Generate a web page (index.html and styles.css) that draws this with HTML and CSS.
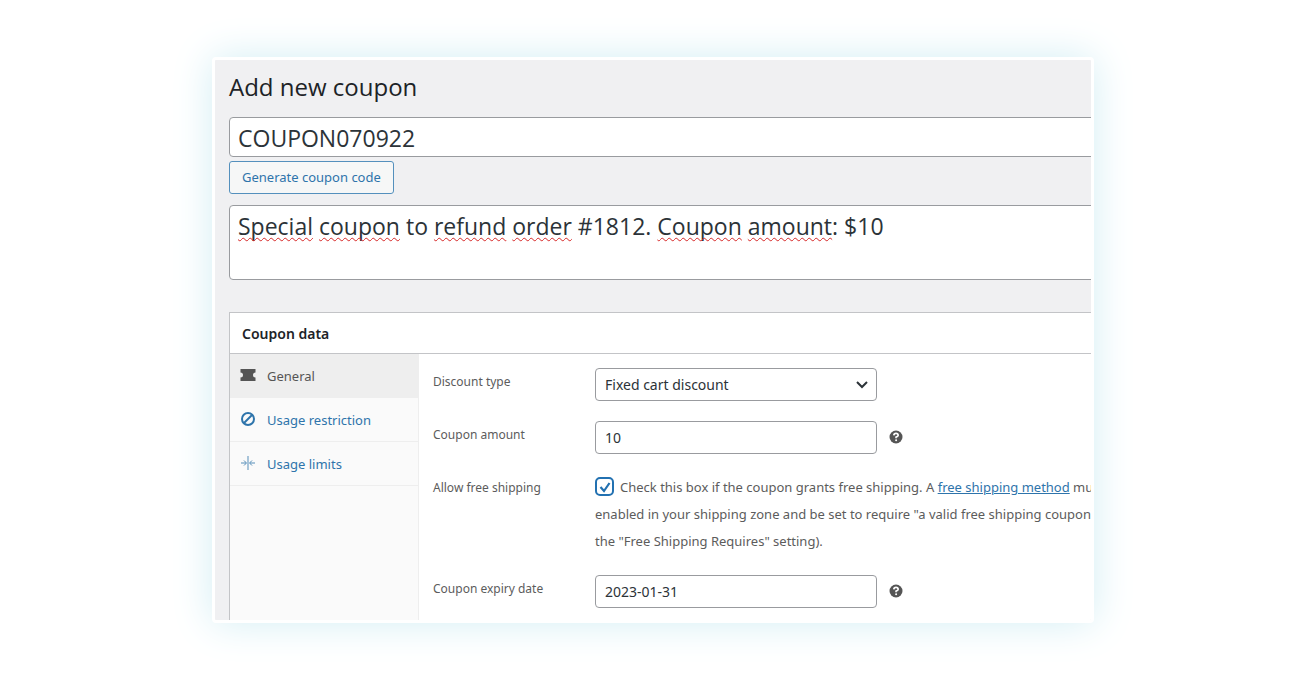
FILE: index.html
```html
<!DOCTYPE html>
<html lang="en">
<head>
    <meta charset="UTF-8">
    <meta name="viewport" content="width=device-width, initial-scale=1.0">
    <title>Add new coupon</title>
    <link rel="stylesheet" href="styles.css">
</head>
<body>
    <main class="frame">
        <form class="screen">
            <h1 class="page-title">Add new coupon</h1>
            <input class="title-input" type="text" value="COUPON070922" aria-label="Coupon code">
            <button class="generate-button" type="button">Generate coupon code</button>
            <div class="description">
                <textarea class="description-text" aria-label="Description" spellcheck="false">Special coupon to refund order #1812. Coupon amount: $10</textarea>
                <!-- spelling marks, drawn over the textarea -->
                <div class="description-marks" aria-hidden="true"><mark>Special</mark> <mark>coupon</mark> to <mark>refund</mark> <mark>order</mark> #1812. <mark>Coupon</mark> <mark>amount</mark>: $10</div>
            </div>

            <section class="postbox">
                <h2 class="postbox-title">Coupon data</h2>
                <div class="postbox-body">
                    <nav class="tabs">
                        <a class="tab active" href="#general">
                            <svg class="tab-icon" viewBox="0 0 16 16"><path fill="currentColor" d="M.5 1h15v3.500q-2.500 0-2.500 2.500t2.500 2.500v3.500H.5V9.500Q3 9.500 3 7T.5 4.500z"/></svg>
                            General
                        </a>
                        <a class="tab" href="#restriction">
                            <svg class="tab-icon" viewBox="0 0 16 16" fill="none" stroke="currentColor" stroke-width="2"><circle cx="8" cy="7" r="6"/><path d="M4 11l8-8"/></svg>
                            Usage restriction
                        </a>
                        <a class="tab" href="#limits">
                            <svg class="tab-icon thin" viewBox="0 0 16 16" fill="none" stroke="currentColor"><path d="M8 0v14M1 7h5M15 7h-5M4 4.500L6.500 7 4 9.500M12 4.500L9.500 7l2.500 2.500"/></svg>
                            Usage limits
                        </a>
                    </nav>
                    <div class="panel" id="general">
                        <div class="field">
                            <label for="discount_type">Discount type</label>
                            <select class="control" id="discount_type">
                                <option>Fixed cart discount</option>
                                <option>Percentage discount</option>
                                <option>Fixed product discount</option>
                            </select>
                        </div>
                        <div class="field">
                            <label for="coupon_amount">Coupon amount</label>
                            <input class="control" id="coupon_amount" type="text" value="10">
                            <svg class="help" viewBox="0 0 14 14"><circle cx="7" cy="7" r="6.500" fill="#555"/><path d="M4.800 5.400Q5 3.400 7 3.400t2.200 1.900Q9.200 6.500 7.100 7.100v1.200" fill="none" stroke="#fff" stroke-width="1.700"/><circle cx="7.100" cy="10.300" r="1" fill="#fff"/></svg>
                        </div>
                        <div class="field">
                            <label for="free_shipping">Allow free shipping</label>
                            <p class="note"><input class="checkbox" id="free_shipping" type="checkbox" checked>Check this box if the coupon grants free shipping. A <a href="#">free shipping method</a> must be<br>enabled in your shipping zone and be set to require "a valid free shipping coupon" (see<br>the "Free Shipping Requires" setting).</p>
                        </div>
                        <div class="field">
                            <label for="expiry_date">Coupon expiry date</label>
                            <input class="control" id="expiry_date" type="text" value="2023-01-31">
                            <svg class="help" viewBox="0 0 14 14"><circle cx="7" cy="7" r="6.500" fill="#555"/><path d="M4.800 5.400Q5 3.400 7 3.400t2.200 1.900Q9.200 6.500 7.100 7.100v1.200" fill="none" stroke="#fff" stroke-width="1.700"/><circle cx="7.100" cy="10.300" r="1" fill="#fff"/></svg>
                        </div>
                    </div>
                </div>
            </section>
        </form>
    </main>
</body>
</html>
```
FILE: styles.css
```css
* {
    box-sizing: border-box;
}

body {
    margin: 0;
    padding: 57px 206px 57px 212px;
    background: #fff;
    color: #5c5c5c;
    font-family: "Segoe UI", "Noto Sans", sans-serif;
    font-size: 13px;
}

input,
select,
textarea,
button {
    font-family: inherit;
    margin: 0;
}

a {
    color: #2e74ab;
}

.frame {
    border: 3px solid #fff;
    border-radius: 4px;
    background: #f0f0f2;
    box-shadow: 0 0 40px #d3eef4;
    overflow: hidden;
}

/* the screen runs on past the right edge of the frame */
.screen {
    display: flex;
    flex-direction: column;
    align-items: flex-start;
    width: calc(100% + 80px);
    padding: 11px 0 0 14px;
}

.page-title,
.title-input,
.description {
    font-family: "Segoe UI", "Open Sans", sans-serif;
}

.page-title {
    margin: 0 0 14px;
    color: #1d2327;
    font-size: 24px;
    font-weight: 400;
    line-height: 32px;
}

.title-input {
    width: 100%;
    height: 40px;
    margin-bottom: 4px;
    padding: 2px 8px 0;
    border: 1px solid #999b9f;
    border-radius: 4px;
    background: #fff;
    color: #2c3338;
    font-size: 23px;
}

.generate-button {
    height: 33px;
    margin-bottom: 11px;
    padding: 0 12px 1px;
    border: 1px solid #5490bd;
    border-radius: 3px;
    background: #f6f7f7;
    color: #2e74ab;
    font-size: 13px;
}

.description {
    display: grid;
    width: 100%;
    height: 75px;
    margin-bottom: 32px;
}

.description-text,
.description-marks {
    grid-area: 1 / 1;
    padding: 5px 8px;
    border: 1px solid #999b9f;
    border-radius: 4px;
    font-size: 23px;
    line-height: 30px;
}

.description-text {
    background: #fff;
    color: #2c3338;
    resize: none;
}

.description-marks {
    border-color: transparent;
    color: transparent;
    pointer-events: none;
}

.description-marks mark {
    background: none;
    color: transparent;
    text-decoration: underline wavy #d62828 1px;
    text-decoration-skip-ink: none;
    text-underline-offset: 2px;
}

.postbox {
    width: 100%;
    border: 1px solid #c3c4c7;
    border-bottom: 0;
    background: #fff;
}

.postbox-title {
    margin: 0;
    padding: 1px 12px 0;
    border-bottom: 1px solid #c3c4c7;
    color: #1d2327;
    font-size: 14px;
    font-weight: 600;
    line-height: 39px;
}

.postbox-body {
    display: flex;
}

.tabs {
    flex: none;
    width: 189px;
    border-right: 1px solid #eee;
    background: #fafafa;
}

.tab {
    display: flex;
    align-items: center;
    gap: 11px;
    height: 44px;
    padding: 0 10px;
    border-bottom: 1px solid #eee;
    text-decoration: none;
}

.tab.active {
    background: #eee;
    color: #555;
}

.tab-icon {
    flex: none;
    width: 16px;
    height: 16px;
}

.tab-icon.thin {
    opacity: .8;
}

.panel {
    flex: 1;
    padding: 14px 0 12px 14px;
}

.field {
    display: flex;
    align-items: flex-start;
    margin-bottom: 20px;
}

.field:last-child {
    margin-bottom: 0;
}

.field label {
    flex: none;
    width: 162px;
    font-size: 12px;
    line-height: 27px;
}

.control {
    width: 282px;
    height: 33px;
    padding: 0 9px;
    border: 1px solid #999b9f;
    border-radius: 4px;
    background: #fff;
    color: #2c3338;
    font-size: 14px;
}

select.control {
    appearance: none;
    background: #fff url("data:image/svg+xml,%3Csvg xmlns='http://www.w3.org/2000/svg' viewBox='0 0 12 8'%3E%3Cpath d='M1 1l5 5 5-5' fill='none' stroke='%232c3338' stroke-width='2'/%3E%3C/svg%3E") no-repeat right 8px center / 12px 8px;
}

.help {
    width: 14px;
    height: 14px;
    margin: 9px 0 0 12px;
}

.note {
    margin: 0;
    line-height: 27px;
    white-space: nowrap;
}

.checkbox {
    appearance: none;
    width: 19px;
    height: 19px;
    margin-right: 6px;
    border: 2px solid #2271b1;
    border-radius: 5px;
    background: #fff url("data:image/svg+xml,%3Csvg xmlns='http://www.w3.org/2000/svg' viewBox='0 0 14 14'%3E%3Cpath d='M2.500 7l3.500 4L11.500 3' fill='none' stroke='%232271b1' stroke-width='2.200'/%3E%3C/svg%3E") no-repeat center / 14px 14px;
    vertical-align: -4px;
}
```
